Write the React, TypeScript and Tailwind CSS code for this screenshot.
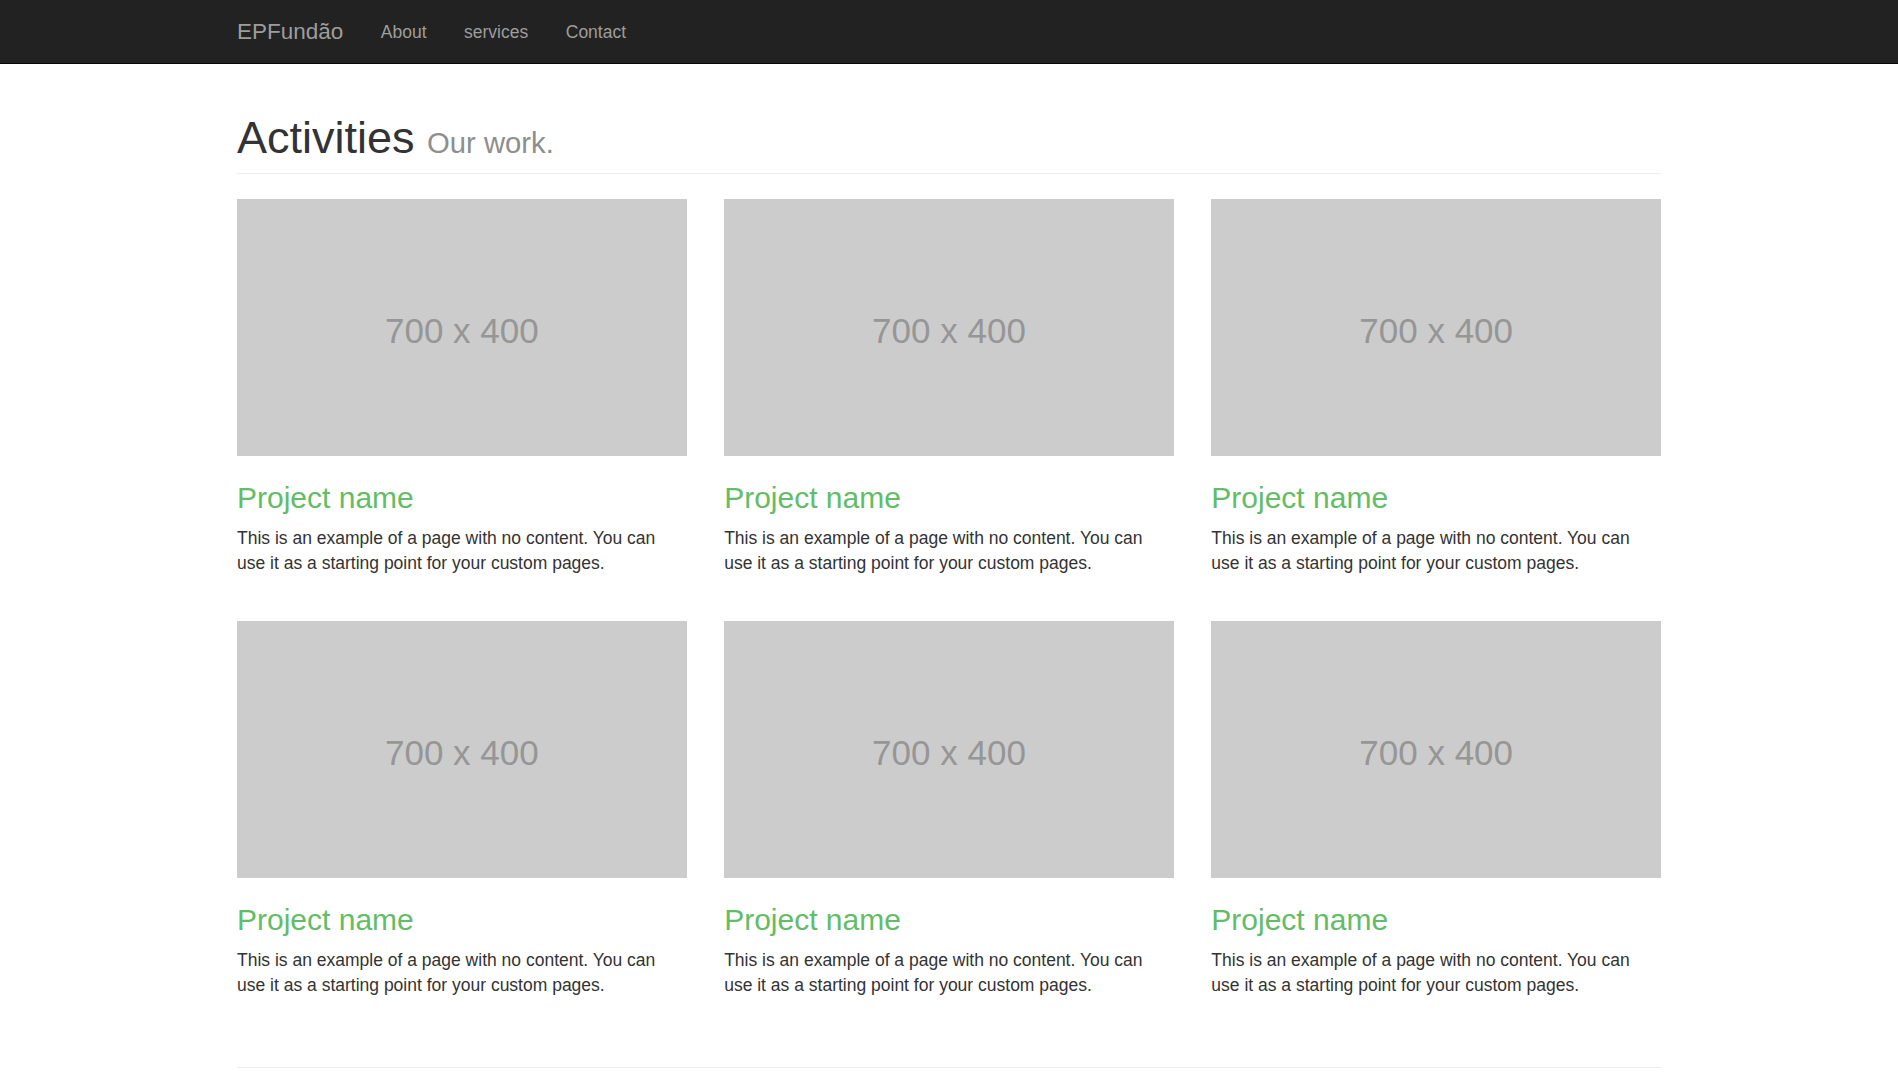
import React from "react";

const items = [1, 2, 3, 4, 5, 6];

function Placeholder() {
  return (
    <div className="h-[257px] bg-[#ccc] flex items-center justify-center">
      <span className="text-[35px] text-[#969696] leading-none pt-[7px]">700 x 400</span>
    </div>
  );
}

function ProjectCard() {
  return (
    <div>
      <a href="#">
        <Placeholder />
      </a>
      <h3 className="mt-[25px] text-[30px] leading-[1.1] font-normal">
        <a href="#" className="text-[#62bd66]">
          Project name
        </a>
      </h3>
      <p className="mt-[12.5px] text-[17.5px] leading-[25px]">
        This is an example of a page with no content. You can use it as a starting point for your custom pages.
      </p>
    </div>
  );
}

export default function App() {
  return (
    <div className="min-h-screen bg-white font-['Liberation_Sans',Arial,sans-serif] text-[#333]">
      <nav className="h-[64px] bg-[#222] border-b border-[#080808]">
        <div className="w-[1424px] mx-auto h-full flex items-center pt-[2px]">
          <a href="#" className="text-[22.5px] text-[#9d9d9d] leading-none">
            EPFundão
          </a>
          <ul className="flex ml-[18.75px]">
            {["About", "services", "Contact"].map((l) => (
              <li key={l}>
                <a href="#" className="block px-[18.75px] text-[17.5px] text-[#9d9d9d] leading-none">
                  {l}
                </a>
              </li>
            ))}
          </ul>
        </div>
      </nav>

      <main className="w-[1424px] mx-auto pt-[49px]">
        <div className="pb-[10px] border-b border-[#eee]">
          <h1 className="text-[45px] leading-[1.1] font-normal">
            Activities <small className="text-[29.25px] text-[#8e8e8e] leading-none">Our work.</small>
          </h1>
        </div>

        <div className="grid grid-cols-3 gap-x-[37.5px] gap-y-[44.5px] mt-[25px]">
          {items.map((i) => (
            <ProjectCard key={i} />
          ))}
        </div>

        <hr className="mt-[68.5px] mb-[60px] border-t border-[#eee]" />
      </main>
    </div>
  );
}
